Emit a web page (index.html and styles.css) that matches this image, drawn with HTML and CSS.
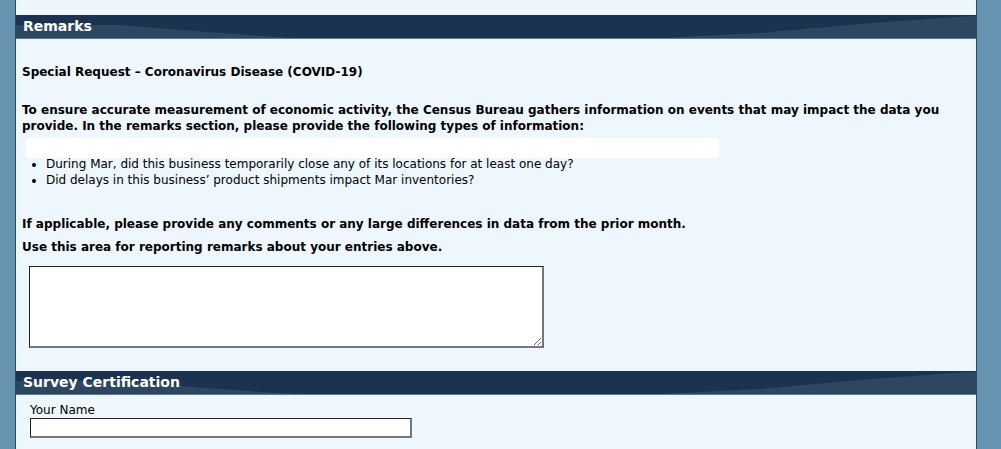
FILE: index.html
```html
<!DOCTYPE html>
<html lang="en">

<head>
    <meta charset="UTF-8">
    <title>Survey Remarks</title>
    <link rel="stylesheet" href="styles.css">
</head>

<body>
    <div class="page">
        <div class="section-head">
            <svg class="swoosh" viewBox="0 0 960 23" preserveAspectRatio="none">
                <polygon points="0,10 104,10 154,14 204,18 260,22 290,23 0,23" fill="#2f4660" />
                <polygon points="644,23 744,18 844,9 944,1.5 960,1 960,23" fill="#2f4660" />
            </svg>
            <span>Remarks</span>
        </div>

        <div class="remarks">
            <p class="title">Special Request &ndash; Coronavirus Disease (COVID-19)</p>
            <p class="intro">To ensure accurate measurement of economic activity, the Census Bureau gathers information on events that may impact the data you provide. In the remarks section, please provide the following types of information:</p>
            <div class="blank-box"></div>
            <ul class="questions">
                <li>During Mar, did this business temporarily close any of its locations for at least one day?</li>
                <li>Did delays in this business&rsquo; product shipments impact Mar inventories?</li>
            </ul>
            <p class="note">If applicable, please provide any comments or any large differences in data from the prior month.</p>
            <p class="note second">Use this area for reporting remarks about your entries above.</p>
            <textarea class="remarks-box"></textarea>
        </div>

        <div class="section-head">
            <svg class="swoosh" viewBox="0 0 960 23" preserveAspectRatio="none">
                <polygon points="0,10 104,10 154,14 204,18 260,22 290,23 0,23" fill="#2f4660" />
                <polygon points="644,23 744,18 844,9 944,1.5 960,1 960,23" fill="#2f4660" />
            </svg>
            <span>Survey Certification</span>
        </div>

        <div class="certify">
            <label for="your-name">Your Name</label>
            <input type="text" id="your-name" class="name-input">
        </div>
    </div>
</body>

</html>
```

FILE: styles.css
```css
body {
    margin: 0;
    padding: 0;
    background-color: #6894b4;
    font-family: "DejaVu Sans", Verdana, sans-serif;
    font-size: 12px;
    color: #000;
}

.page {
    margin-left: 15px;
    width: 960px;
    min-height: 449px;
    padding-top: 15px;
    background-color: #eef6fe;
    border-left: 1px solid #1c4e5b;
    border-right: 1px solid #1c4e5b;
}

.section-head {
    position: relative;
    height: 23px;
    background-color: #1b3350;
    border-bottom: 1px solid #4f7f9e;
    color: white;
    font-weight: bold;
    font-size: 14px;
    line-height: 23px;
    padding-left: 7px;
}

.section-head span {
    position: relative;
}

.swoosh {
    position: absolute;
    left: 0;
    top: 0;
    width: 100%;
    height: 100%;
}

.remarks {
    padding: 25px 0 23px 6px;
}

.remarks p {
    margin: 0;
    font-weight: bold;
    line-height: 16px;
}

.remarks .intro {
    margin-top: 22px;
}

.blank-box {
    width: 693px;
    height: 20px;
    margin: 4px 0 0 4px;
    background-color: white;
    border-radius: 3px;
}

.questions {
    margin: -2px 0 0 0;
    padding-left: 24px;
    line-height: 16px;
}

.remarks .note {
    margin-top: 28px;
}

.remarks .note.second {
    margin-top: 7px;
}

.remarks-box {
    display: block;
    margin: 11px 0 0 7px;
    width: 508px;
    height: 75px;
    padding: 2px;
    box-sizing: content-box;
    border-style: solid;
    border-width: 1px 2px 2px 1px;
    border-color: #222 #767676 #767676 #222;
    background: white;
}

.certify {
    padding: 7px 0 0 14px;
}

.certify label {
    display: block;
    font-size: 12px;
    line-height: 16px;
}

.name-input {
    display: block;
    width: 379px;
    height: 17px;
    padding: 0;
    margin-top: 0;
    border-style: solid;
    border-width: 1px 2px 2px 1px;
    border-color: #222 #767676 #767676 #222;
}
```
